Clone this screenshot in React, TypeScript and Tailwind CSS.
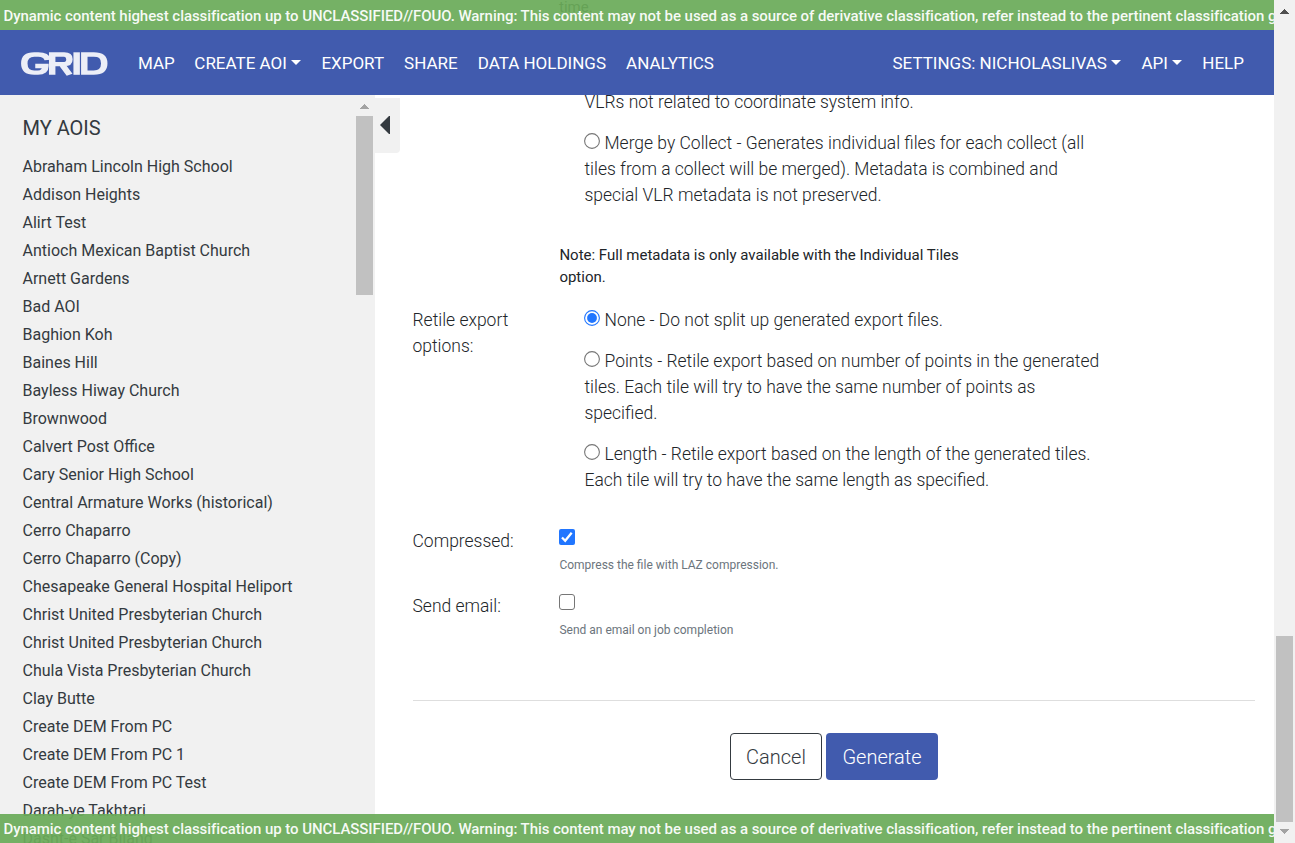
import type { ReactNode } from 'react';

const AOIS = [
  'Abraham Lincoln High School', 'Addison Heights', 'Alirt Test', 'Antioch Mexican Baptist Church',
  'Arnett Gardens', 'Bad AOI', 'Baghion Koh', 'Baines Hill', 'Bayless Hiway Church', 'Brownwood',
  'Calvert Post Office', 'Cary Senior High School', 'Central Armature Works (historical)',
  'Cerro Chaparro', 'Cerro Chaparro (Copy)', 'Chesapeake General Hospital Heliport',
  'Christ United Presbyterian Church', 'Christ United Presbyterian Church',
  'Chula Vista Presbyterian Church', 'Clay Butte', 'Create DEM From PC', 'Create DEM From PC 1',
  'Create DEM From PC Test', 'Darah-ye Takhtari', 'Dasht-e Sar Biland',
];

function Banner({ place }: { place: string }) {
  return (
    <div className={`absolute left-0 z-10 w-[1274px] overflow-hidden bg-[#6aab59]/93 pl-[3.5px] text-[15px] font-medium tracking-[-0.059px] whitespace-nowrap text-white/95 ${place}`}>
      Dynamic content highest classification up to UNCLASSIFIED//FOUO. Warning: This content may not be used as a source of derivative classification, refer instead to the pertinent classification guide(s).
    </div>
  );
}

function Caret() {
  return <span className="ml-[4.5px] inline-block border-x-[5px] border-t-[5px] border-x-transparent border-t-white align-[4px]" />;
}

function Radio({ checked }: { checked?: boolean }) {
  return (
    <svg viewBox="0 0 16 16" className="-ml-px mr-[5px] inline-block size-4 align-[0px]">
      <circle cx="8" cy="8" r="7.4" fill="#fff" stroke={checked ? '#2176ff' : '#767676'} strokeWidth="1.1" />
      {checked && <circle cx="8" cy="8" r="4.9" fill="#2176ff" />}
    </svg>
  );
}

function Option({ checked, children }: { checked?: boolean; children: ReactNode }) {
  return (
    <div className="mb-[15px] whitespace-nowrap">
      <Radio checked={checked} />
      {children}
    </div>
  );
}

function Arrow({ down, color }: { down?: boolean; color: string }) {
  return (
    <svg viewBox="0 0 9 5" className="h-[5px] w-[9px]" shapeRendering="crispEdges">
      <path d={down ? 'M0 0h9L4.5 5z' : 'M0 5h9L4.5 0z'} fill={color} />
    </svg>
  );
}

export default function App() {
  return (
    <div className="relative flex h-[843px] w-[1295px] overflow-hidden bg-white font-['Roboto',sans-serif] text-[#212529]">
      <Banner place="top-0 h-[30px] leading-[32px]" />
      <div className="flex w-[1274px] flex-col">
        <div className="h-[30px] shrink-0 pl-[559px] text-[15px] leading-[14px]">time.</div>
        <nav className="flex h-[65px] shrink-0 items-center bg-[#415bae] pr-[30px] pl-[21px] text-[17px] text-white">
          <svg viewBox="0 0 58 24" className="mt-[3px] mr-[30px] h-[24px] w-[87px]" preserveAspectRatio="none" fill="none" stroke="#eceef7" strokeWidth="4.3">
            <path d="M17.800 8C17.200 4.300 15.300 2.500 11.500 2.500H8.800C4.500 2.500 2.200 5.500 2.200 11.500S4.500 20.600 8.800 20.600h2.500c3 0 5-2 5-6.600H9.500" />
            <path d="M20.800 22.800V2.500h8c2.400 0 3.500 1.600 3.500 4.700s-1.100 4.900-3.500 4.900H22M27.800 13.500l4.600 9.300" />
            <path d="M37.100.3v22.500" />
            <path d="M42.200 2.500v18.100h6.300c4.800 0 7-3 7-9.100s-2.200-9-7-9z" />
          </svg>
          <div className="flex flex-1 gap-5 pt-0.5">
            <span>MAP</span>
            <span className="-ml-[0.500px]">CREATE AOI<Caret /></span>
            <span>EXPORT</span>
            <span>SHARE</span>
            <span>DATA HOLDINGS</span>
            <span>ANALYTICS</span>
          </div>
          <div className="flex gap-5 pt-0.5">
            <span>SETTINGS: NICHOLASLIVAS<Caret /></span>
            <span>API<Caret /></span>
            <span>HELP</span>
          </div>
        </nav>
        <div className="flex min-h-0 flex-1 overflow-hidden">
          <aside className="flex w-[375px] shrink-0 justify-between bg-[#f1f1f1] pr-0.5">
            <div className="pl-[22.5px] text-[#343a40]">
              <h1 className="mt-[18px] mb-[10px] text-xl leading-[30px]">MY AOIS</h1>
              <ul className="text-base leading-[28px]">
                {AOIS.map((name, i) => <li key={i} className="whitespace-nowrap">{name}</li>)}
              </ul>
            </div>
            <div className="flex w-[17px] flex-col items-center pt-[9px]">
              <Arrow color="#a3a3a3" />
              <div className="mt-[7px] h-[179px] w-[17px] bg-[#c1c1c1]" />
            </div>
          </aside>
          <div className="mt-[3px] flex h-[55px] w-[25px] shrink-0 items-center rounded-br bg-[#f1f1f1] pb-px pl-[5px]">
            <svg viewBox="0 0 10 18" className="h-[18px] w-[10px]"><path d="M0 9 9 0h1v18H9z" fill="#343a40" /></svg>
          </div>
          <main className="w-[855px] pl-[13px] text-[17.48px] leading-[26px] font-light">
            <div className="h-[153px] pl-[171.500px]">
              <div className="-mt-[6px] mb-[15px]">VLRs not related to coordinate system info.</div>
              <Option>Merge by Collect - Generates individual files for each collect (all<br />tiles from a collect will be merged). Metadata is combined and<br />special VLR metadata is not preserved.</Option>
            </div>
            <p className="mt-[2px] pl-[146.400px] text-[15px] leading-[22px] font-normal">Note: Full metadata is only available with the Individual Tiles<br />option.</p>
            <div className="mt-[19px] flex h-[221px]">
              <div className="-ml-[0.500px] w-[172px] shrink-0">Retile export<br />options:</div>
              <div>
                <Option checked>None - Do not split up generated export files.</Option>
                <Option>Points - Retile export based on number of points in the generated<br />tiles. Each tile will try to have the same number of points as<br />specified.</Option>
                <Option>Length - Retile export based on the length of the generated tiles.<br />Each tile will try to have the same length as specified.</Option>
              </div>
            </div>
            <div className="flex h-[65px]">
              <div className="-ml-[0.500px] w-[146.500px]">Compressed:</div>
              <div className="pt-[1px]">
                <svg viewBox="0 0 16 16" className="size-4"><rect width="16" height="16" rx="2" fill="#2176ff" /><path d="m3 8.500 3.200 3.200L12.700 3.700" fill="none" stroke="#fff" strokeWidth="2.300" /></svg>
                <p className="mt-[11px] pl-[0.400px] text-xs leading-[18px] font-normal text-[#6c757d]">Compress the file with LAZ compression.</p>
              </div>
            </div>
            <div className="flex h-[107px]">
              <div className="-ml-[0.500px] w-[146.500px]">Send email:</div>
              <div className="pt-[1px]">
                <div className="size-4 rounded-[3px] border border-[#767676]" />
                <p className="mt-[11px] pl-[0.400px] text-xs leading-[18px] font-normal text-[#6c757d]">Send an email on job completion</p>
              </div>
            </div>
            <div className="flex justify-center gap-1 border-t border-[#dedede] pt-8 text-xl">
              <button className="h-[47px] w-[92px] rounded border border-[#343a40] text-[#343a40]">Cancel</button>
              <button className="h-[47px] w-[112px] rounded bg-[#415bae] text-white">Generate</button>
            </div>
          </main>
        </div>
      </div>
      <div className="flex w-[21px] flex-col items-center bg-[#f1f1f1] pt-[9px]">
        <Arrow color="#505050" />
        <div className="mt-[622px] mb-[7px] h-[186px] w-[17px] bg-[#c1c1c1]" />
        <Arrow down color="#a3a3a3" />
      </div>
      <Banner place="bottom-0 h-[29px] leading-[30px]" />
    </div>
  );
}
